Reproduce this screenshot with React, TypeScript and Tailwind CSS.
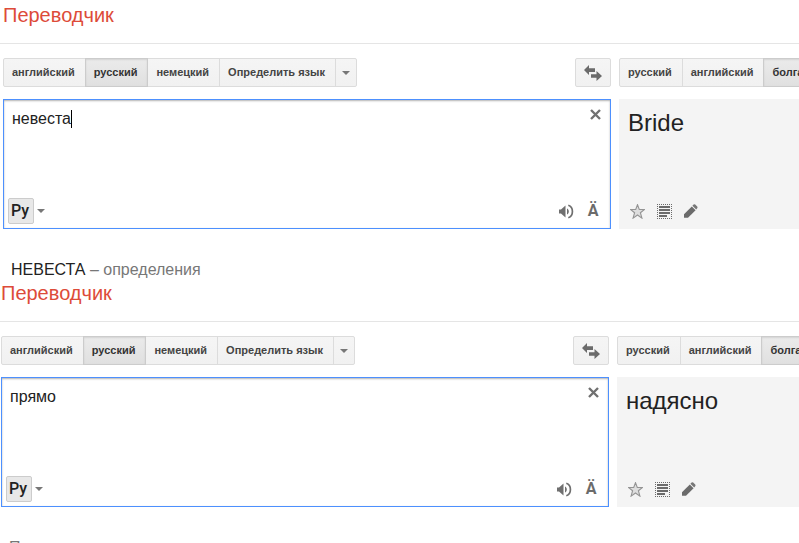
import React, { useState } from "react";
import clsx from "clsx";

type Translation = {
    id: string;
    source: string;
    result: string;
    editing: boolean;
    word?: string;
    note: string;
};

const sourceLangs = ["английский", "русский", "немецкий", "Определить язык"];
const targetLangs = ["русский", "английский", "болгарский"];

const translations: Translation[] = [
    { id: "bride", source: "невеста", result: "Bride", editing: true, word: "НЕВЕСТА", note: " – определения" },
    { id: "right", source: "прямо", result: "надясно", editing: false, note: "Переводы" },
];

const Caret = () => (
    <svg width="8" height="4" viewBox="0 0 8 4" fill="#777" aria-hidden="true">
        <path d="M0 0H8L4 4Z" />
    </svg>
);

const SwapIcon = () => (
    <svg width="18" height="16" viewBox="0 0 18 16" fill="#6b6b6b" aria-hidden="true">
        <path d="M0 5L5 0V3.3H11V7H5V10Z" />
        <path d="M18 11L12.5 16V12.8H7V9.2H12.5V6Z" />
    </svg>
);

const ClearIcon = () => (
    <svg width="11" height="11" viewBox="0 0 11 11" stroke="#707070" strokeWidth="2.4" aria-hidden="true">
        <path d="M1 1L10 10M10 1L1 10" />
    </svg>
);

const SpeakerIcon = () => (
    <svg width="15" height="15" viewBox="0 0 15 15" aria-hidden="true">
        <path d="M0 5.5H2L6.5 1.5V13.5L2 9.5H0Z" fill="#6f6f6f" />
        <path d="M8 4.5C10.4 5.7 10.4 9.3 8 10.5Z" fill="#6f6f6f" />
        <path d="M9.3 1.3C14.8 3 14.8 12 9.3 13.7" fill="none" stroke="#6f6f6f" strokeWidth="1.7" />
    </svg>
);

const StarIcon = () => (
    <svg width="15" height="15" viewBox="0.5 0.5 15 15" aria-hidden="true">
        <path
            d="M8 1.2L9.8 6H15L10.9 9.2L12.4 14.6L8 11.5L3.6 14.6L5.1 9.2L1 6H6.2Z"
            fill="#dedede"
            stroke="#949494"
            strokeWidth="1.1"
        />
    </svg>
);

const TextIcon = () => (
    <svg width="15" height="15" viewBox="0 0 15 15" shapeRendering="crispEdges" aria-hidden="true">
        <path
            d="M0 .5H15M0 14.5H15M.5 0V15M14.5 0V15"
            stroke="#6b6b6b"
            strokeDasharray="1 1"
            fill="none"
        />
        <path d="M2 2H13V4H2ZM2 5H13V7H2ZM2 8H13V10H2ZM2 11H10V13H2Z" fill="#6b6b6b" />
    </svg>
);

const PencilIcon = () => (
    <svg width="14" height="14" viewBox="0 0 14 14" aria-hidden="true">
        <path d="M0 10.2L7.8 2.4L11.6 6.2L4 13.8H0Z" fill="#6b6b6b" />
        <path d="M8.4 1.8L9.6 .6Q10.4 0 11.2 .6L13.2 2.6Q14 3.4 13.2 4.2L12.2 5.6Z" fill="#777" />
    </svg>
);

function LangTabs({ langs, active, onPick, menu }: {
    langs: string[];
    active: string;
    onPick: (lang: string) => void;
    menu?: boolean;
}) {
    return (
        <div className="flex h-[29px] text-[11px] font-bold leading-[27px] text-[#444]">
            {langs.map((lang) => (
                <button
                    key={lang}
                    onClick={() => onPick(lang)}
                    className={clsx(
                        "shrink-0 whitespace-nowrap border pl-2 pr-2.5 -ml-px first:ml-0 first:rounded-l-xs",
                        lang === active
                            ? "relative border-[#ccc] bg-linear-to-b from-[#ebebeb] to-[#e0e0e0] text-[#333] shadow-[inset_0_1px_2px_rgba(0,0,0,0.1)]"
                            : "border-[#dcdcdc] bg-linear-to-b from-[#f5f5f5] to-[#f1f1f1]"
                    )}
                >
                    {lang}
                </button>
            ))}
            {menu && (
                <button
                    aria-label="Другие языки"
                    className="-ml-px flex w-[22px] shrink-0 items-center justify-center rounded-r-xs border border-[#dcdcdc] bg-linear-to-b from-[#f5f5f5] to-[#f1f1f1]"
                >
                    <Caret />
                </button>
            )}
        </div>
    );
}

function Translator({ item, className, columns }: { item: Translation; className: string; columns: string }) {
    const [text, setText] = useState(item.source);
    const [from, setFrom] = useState("русский");
    const [to, setTo] = useState("болгарский");

    return (
        <section>
            <header className={clsx("h-11 border-b border-[#e5e5e5]", className)}>
                <h1 className="text-[20px] leading-[30px] text-[#dd4b39]">Переводчик</h1>
            </header>

            <div className={clsx("grid gap-x-2 gap-y-3 pt-3.5", className, columns)}>
                {/* Language bars */}
                <div className="flex justify-between">
                    <LangTabs langs={sourceLangs} active={from} onPick={setFrom} menu />
                    <button
                        aria-label="Поменять языки"
                        className="flex h-[29px] w-9 items-center justify-center rounded-xs border border-[#dcdcdc] bg-linear-to-b from-[#f5f5f5] to-[#f1f1f1]"
                    >
                        <SwapIcon />
                    </button>
                </div>
                <div className="overflow-hidden">
                    <LangTabs langs={targetLangs} active={to} onPick={setTo} />
                </div>

                {/* Source text */}
                <div className="relative flex h-[130px] flex-col border border-[#4d90fe] bg-white shadow-[inset_0_1px_2px_rgba(0,0,0,0.3)]">
                    <div className="flex flex-1">
                        <textarea
                            id={item.id}
                            aria-label="Исходный текст"
                            value={text}
                            onChange={(e) => setText(e.target.value)}
                            spellCheck={false}
                            className="flex-1 resize-none bg-transparent pl-2 pt-[9px] text-[16px] leading-5 text-[#222] outline-none"
                        />
                        <button aria-label="Очистить" onClick={() => setText("")} className="flex h-7 w-[30px] items-center justify-center">
                            <ClearIcon />
                        </button>
                    </div>
                    {item.editing && <span className="absolute left-[67px] top-2.5 h-[18px] w-px bg-black" />}
                    <div className="flex h-[30px] items-start justify-between pl-1 pr-2.5">
                        <div className="flex items-center">
                            <button className="h-[26px] w-[26px] rounded-xs border border-[#ccc] bg-[#e8e8e8] pr-0.5 text-center font-['Roboto'] text-[16px] font-medium leading-6 text-[#222]">
                                Ру
                            </button>
                            <button aria-label="Способ ввода" className="flex h-[26px] w-3.5 items-center justify-center">
                                <Caret />
                            </button>
                        </div>
                        <div className="flex h-[26px] items-center gap-3">
                            <button aria-label="Прослушать">
                                <SpeakerIcon />
                            </button>
                            <button className="w-3.5 text-center font-['Roboto'] text-[16px] font-bold leading-[26px] text-[#6b6b6b]">Ä</button>
                        </div>
                    </div>
                </div>

                {/* Result */}
                <div className="flex h-[130px] flex-col justify-between overflow-hidden bg-[#f4f4f4]">
                    <p className="px-[9px] pt-2 text-[24px] leading-8 text-[#222]">{item.result}</p>
                    <div className="flex h-[31px] items-start pl-[11px]">
                        <div className="flex h-[26px] items-center gap-3">
                            <button aria-label="Сохранить"><StarIcon /></button>
                            <button aria-label="Выделить всё"><TextIcon /></button>
                            <button aria-label="Исправить"><PencilIcon /></button>
                        </div>
                    </div>
                </div>
            </div>

            <div className={className}>
                <h2 className="mt-8 h-[17px] pl-2 text-[16px] leading-[18px] text-[#777]">
                    {item.word && <span className="text-[#222]">{item.word}</span>}
                    {item.note}
                </h2>
            </div>
        </section>
    );
}

export default function App() {
    return (
        <main className="h-screen overflow-hidden bg-white font-['Liberation_Sans',Arial,sans-serif]">
            <Translator item={translations[0]} className="pl-[3px]" columns="grid-cols-[minmax(0,1fr)_180px]" />
            <Translator item={translations[1]} className="pl-px" columns="grid-cols-[minmax(0,1fr)_182px]" />
        </main>
    );
}
